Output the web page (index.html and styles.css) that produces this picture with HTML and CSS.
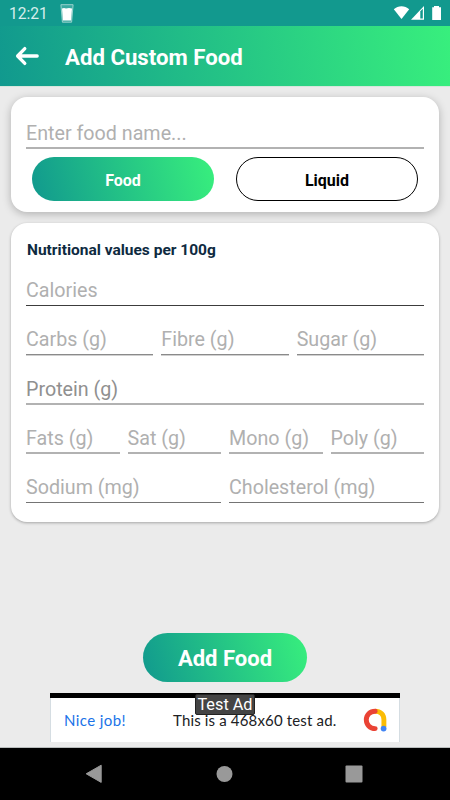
FILE: index.html
```html
<!doctype html>
<html lang="en">

<head>
    <meta charset="utf-8" />
    <meta name="viewport" content="width=device-width" />
    <title>Add Custom Food</title>
    <link rel="stylesheet" href="styles.css">
</head>

<body>

    <div class="statusbar">
        <span class="clock">12:21</span>
        <svg class="glass" width="14" height="19" viewBox="0 0 14 19">
            <path d="M0.9 0.7H13.1L11.6 18.2H2.4Z" fill="#3aa9a0" stroke="#a5d8d4" stroke-width="0.9" />
            <path d="M2 4.6L4 4L6 4.5L9 4L12 4.4L11.1 16.4H2.9Z" fill="#fff" />
        </svg>
        <svg class="signals" width="50" height="16" viewBox="0 0 50 16">
            <path d="M0.8 4.3C5.2 0.2 11.8 0.2 16.2 4.3L8.5 14Z" fill="#fff" />
            <path d="M31 1V14.8H18Z" fill="#fff" />
            <path d="M27.3 6.2L29.8 3.7V13.6H27.3Z" fill="#12998e" />
            <path d="M41 1H46V2.3H48V15H39.2V2.3H41Z" fill="#fff" />
        </svg>
    </div>

    <header class="appbar">
        <svg class="back" width="24" height="20" viewBox="0 0 24 20">
            <path d="M9.8 2.6L2.6 10L9.8 17.4M2.8 10H22.2" fill="none" stroke="#fff" stroke-width="3.3" stroke-linecap="round" stroke-linejoin="round" />
        </svg>
        <h1>Add Custom Food</h1>
    </header>

    <main>
        <section class="card name-card">
            <div class="field">Enter food name...</div>
            <div class="types">
                <button class="type selected" type="button">Food</button>
                <button class="type" type="button">Liquid</button>
            </div>
        </section>

        <section class="card values-card">
            <h2>Nutritional values per 100g</h2>
            <div class="row">
                <div class="field dark">Calories</div>
            </div>
            <div class="row">
                <div class="field mid">Carbs (g)</div>
                <div class="field mid">Fibre (g)</div>
                <div class="field mid">Sugar (g)</div>
            </div>
            <div class="row">
                <div class="field protein">Protein (g)</div>
            </div>
            <div class="row">
                <div class="field">Fats (g)</div>
                <div class="field">Sat (g)</div>
                <div class="field">Mono (g)</div>
                <div class="field">Poly (g)</div>
            </div>
            <div class="row">
                <div class="field last">Sodium (mg)</div>
                <div class="field last">Cholesterol (mg)</div>
            </div>
        </section>

        <button class="add" type="button">Add Food</button>

        <div class="ad">
            <span class="ad-tag">Test Ad</span>
            <span class="ad-nice">Nice job!</span>
            <span class="ad-text">This is a 468x60 test ad.</span>
            <svg class="ad-logo" width="24" height="24" viewBox="0 0 24 24">
                <path d="M12 3.2C17.5 3.2 20.9 6.8 20.9 11.5V19" fill="none" stroke="#fbbc04" stroke-width="4.9" />
                <path d="M12.2 3.2C6.8 3.2 3.3 7 3.3 11.8S6.8 20.6 12.2 20.6" fill="none" stroke="#ea4335" stroke-width="4.9" stroke-linecap="round" />
                <circle cx="20.6" cy="20.6" r="2.9" fill="#4285f4" />
            </svg>
        </div>
    </main>

    <nav class="navbar">
        <svg width="18" height="20" viewBox="0 0 18 20"><path d="M16.2 1.2V18.4L1.2 9.8Z" fill="#999" stroke="#999" stroke-linejoin="round" /></svg>
        <svg width="18" height="18" viewBox="0 0 18 18"><circle cx="9.5" cy="9" r="8" fill="#999" /></svg>
        <svg width="18" height="18" viewBox="0 0 18 18"><rect x="0.5" y="0.5" width="17" height="17" rx="1" fill="#999" /></svg>
    </nav>

</body>

</html>
```

FILE: styles.css
```css
* {
    box-sizing: border-box;
    margin: 0;
    padding: 0;
}

body {
    width: 450px;
    height: 800px;
    display: flex;
    flex-direction: column;
    background-color: #ebebeb;
    font-family: Roboto, "Liberation Sans", sans-serif;
    overflow: hidden;
}

/* top bars */
.statusbar {
    height: 26px;
    display: flex;
    align-items: center;
    padding: 0 7px 0 9px;
    background-color: #12998e;
}

.clock {
    color: #d6eeec;
    font-size: 15.6px;
    line-height: 26px;
    padding-top: 2px;
    width: 51px;
}

.signals {
    margin-left: auto;
}

.appbar {
    height: 60px;
    display: flex;
    align-items: center;
    padding-left: 15px;
    background: linear-gradient(82deg, #11998e, #38ef7d);
    box-shadow: 0 1px 0 #d6e6dc;
}

h1 {
    color: #fff;
    font-size: 22.2px;
    font-weight: bold;
    line-height: 28px;
    margin: 1px 0 0 26px;
}

/* cards */
main {
    flex: 1;
    display: flex;
    flex-direction: column;
    align-items: center;
    padding-top: 11px;
}

.card {
    width: 428px;
    background-color: #fff;
    border-radius: 16px;
    padding: 0 15px;
}

.name-card {
    height: 115px;
    padding-top: 20px;
    box-shadow: 0 2px 8px rgba(0, 0, 0, 0.25);
}

.values-card {
    height: 299px;
    margin-top: 11px;
    padding-top: 16px;
    box-shadow: 0 1px 3px rgba(0, 0, 0, 0.3);
}

.field {
    flex: 1;
    height: 32px;
    border-bottom: 2px solid #b2b2b2;
    color: #b0b0b0;
    font-size: 19.7px;
    line-height: 34px;
    white-space: nowrap;
}

.types {
    display: flex;
    justify-content: space-between;
    padding: 8px 6px 0 6px;
}

.type {
    width: 182px;
    height: 44px;
    padding-top: 2px;
    border: 1.3px solid #000;
    border-radius: 22px;
    background-color: #fff;
    color: #000;
    font-family: inherit;
    font-size: 16px;
    font-weight: bold;
}

.selected {
    border: none;
    background: linear-gradient(76deg, #11998e, #38ef7d);
    color: #fff;
}

h2 {
    color: #0e2a3f;
    font-size: 15.5px;
    font-weight: bold;
    line-height: 22px;
    padding-left: 1px;
    margin-bottom: 13px;
}

.row {
    display: flex;
    gap: 8px;
    margin-bottom: 17.25px;
}

.dark {
    border-bottom: 1px solid #3c3c3c;
}

.mid {
    border-bottom: 1px solid #8a8a8a;
    box-shadow: 0 1px 0 #d0d0d0;
}

.protein {
    color: #909090;
}

.last {
    border-bottom: 1px solid #747474;
}

/* bottom */
.add {
    width: 164px;
    height: 49px;
    padding-top: 1px;
    margin-top: 111px;
    border: none;
    border-radius: 25px;
    background: linear-gradient(73deg, #11998e, #38ef7d);
    color: #fff;
    font-family: inherit;
    font-size: 22px;
    font-weight: bold;
}

.ad {
    position: relative;
    width: 350px;
    height: 49px;
    margin-top: 11px;
    border-top: 5px solid #000;
    background-color: #fff;
    box-shadow: inset 1px 0 0 #d5dde2, inset -1px 0 0 #d5dde2;
    display: flex;
    align-items: center;
    padding: 0 13px 0 14px;
    font-family: Lato, "Liberation Sans", sans-serif;
    font-size: 15px;
}

.ad-nice {
    width: 109px;
    color: #1a73e8;
    letter-spacing: 0.4px;
}

.ad-text {
    color: #202124;
    letter-spacing: 0.16px;
}

.ad-logo {
    margin-left: auto;
}

/* label laid over the top edge of the ad */
.ad-tag {
    position: absolute;
    left: 145px;
    top: -4px;
    width: 60px;
    height: 21px;
    border: 1px solid #222;
    border-radius: 2px;
    background-color: #444;
    color: #fff;
    font-family: Roboto, sans-serif;
    font-size: 16.3px;
    line-height: 20px;
    text-align: center;
}

.navbar {
    height: 53px;
    display: flex;
    align-items: center;
    justify-content: space-between;
    padding: 0 87px 0 85px;
    border-top: 1px solid #b8bcbc;
    background-color: #000;
}
```
